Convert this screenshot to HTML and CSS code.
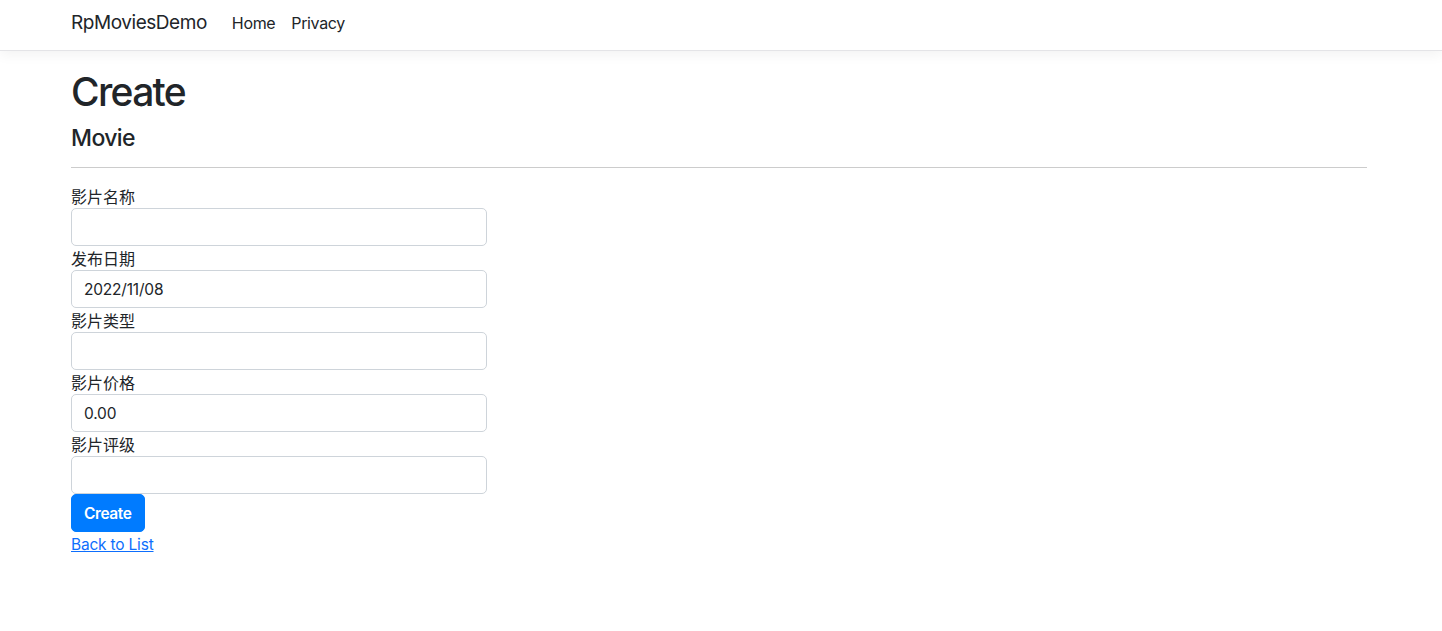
FILE: index.html
```html
<!DOCTYPE html>
<html lang="zh">
<head>
<meta charset="utf-8">
<title>Create - RpMoviesDemo</title>
<link rel="stylesheet" href="styles.css">
</head>
<body>
<header class="navbar">
  <div class="container nav-inner">
    <a class="brand" href="#">RpMoviesDemo</a>
    <nav class="nav-links">
      <a class="nav-link" href="#">Home</a>
      <a class="nav-link" href="#">Privacy</a>
    </nav>
  </div>
</header>
<main class="container main">
  <h1 class="title">Create</h1>
  <h4 class="subtitle">Movie</h4>
  <hr class="rule">
  <form class="form">
    <div class="group">
      <label class="label">影片名称</label>
      <input class="input" type="text" value="">
    </div>
    <div class="group">
      <label class="label">发布日期</label>
      <input class="input" type="text" value="2022/11/08">
    </div>
    <div class="group">
      <label class="label">影片类型</label>
      <input class="input" type="text" value="">
    </div>
    <div class="group">
      <label class="label">影片价格</label>
      <input class="input" type="text" value="0.00">
    </div>
    <div class="group">
      <label class="label">影片评级</label>
      <input class="input" type="text" value="">
    </div>
    <div class="actions">
      <button class="btn" type="button">Create</button>
    </div>
  </form>
  <div class="back"><a class="back-link" href="#">Back to List</a></div>
</main>
</body>
</html>
```
FILE: styles.css
```css
* { box-sizing: border-box; }
html, body { margin: 0; padding: 0; }
body {
  font-family: Inter, "Liberation Sans", "Noto Sans CJK SC", sans-serif;
  font-size: 16px;
  line-height: 1.5;
  color: #212529;
  background: #fff;
}
.container {
  width: 1300px;
  margin: 0 auto;
}
.navbar {
  height: 51px;
  border-bottom: 1px solid #e4e4e7;
  box-shadow: 0 4px 12px rgba(0,0,0,0.05);
  background: #fff;
}
.nav-inner {
  display: flex;
  align-items: center;
  height: 45px;
}
.brand {
  font-size: 19px;
  color: #212529;
  text-decoration: none;
  letter-spacing: -0.45px;
  margin-right: 25px;
  line-height: 30px;
}
.nav-links {
  display: flex;
  gap: 16px;
}
.nav-link {
  color: #212529;
  text-decoration: none;
  font-size: 16px;
  letter-spacing: -0.35px;
}
.main {
  padding-top: 17px;
}
.title {
  font-size: 39px;
  font-weight: 500;
  line-height: 48px;
  margin: 0 0 8px;
  letter-spacing: -1.7px;
}
.subtitle {
  font-size: 23px;
  font-weight: 500;
  line-height: 29px;
  margin: 0;
  letter-spacing: -0.6px;
}
.rule {
  border: 0;
  border-top: 1px solid #ccc;
  margin: 14px 4px 16px 0;
  height: 0;
}
.form {
  width: 416px;
}
.group {
  display: flex;
  flex-direction: column;
}
.label {
  font-family: "Noto Sans CJK SC", sans-serif;
  font-size: 16px;
  line-height: 24px;
}
.input {
  height: 38px;
  width: 100%;
  border: 1px solid #ced4da;
  border-radius: 5px;
  padding: 6px 12px;
  font-family: Inter, "Liberation Sans", sans-serif;
  font-size: 15.5px;
  letter-spacing: -0.2px;
  color: #212529;
  background: #fff;
}
.actions { display: flex; }
.btn {
  height: 38px;
  padding: 0 12px;
  background: #007bff;
  color: #fff;
  border: 1px solid #007bff;
  border-radius: 5px;
  font-family: Inter, "Liberation Sans", sans-serif;
  font-size: 15.5px;
  font-weight: 600;
  letter-spacing: -0.4px;
}
.back { line-height: 24px; }
.back-link {
  color: #0d6efd;
  text-decoration: underline;
  font-size: 15.5px;
  letter-spacing: -0.2px;
}
```
